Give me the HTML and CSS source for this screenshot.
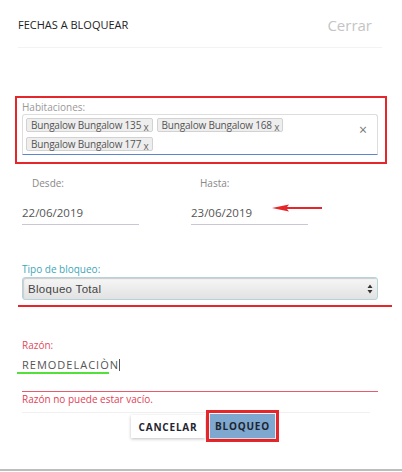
FILE: index.html
```html
<!DOCTYPE html>
<html lang="es">
<head>
    <meta charset="UTF-8">
    <meta name="viewport" content="width=device-width, initial-scale=1.0">
    <title>Fechas a bloquear</title>
    <link rel="stylesheet" href="styles.css">
</head>
<body>
    <div class="modal">
        <header class="modal-head">
            <h1>FECHAS A BLOQUEAR</h1>
            <a href="#" class="close">Cerrar</a>
        </header>

        <section class="hab-frame">
            <label class="hab-label">Habitaciones:</label>
            <div class="multi">
                <div class="tags">
                    <span class="tag">Bungalow Bungalow 135 <i>x</i></span>
                    <span class="tag">Bungalow Bungalow 168 <i>x</i></span>
                    <span class="tag">Bungalow Bungalow 177 <i>x</i></span>
                </div>
                <span class="clear">&times;</span>
            </div>
        </section>

        <section class="dates">
            <div class="date-col">
                <label>Desde:</label>
                <div class="date-val">22/06/2019</div>
            </div>
            <div class="date-col">
                <label>Hasta:</label>
                <div class="date-val">23/06/2019</div>
            </div>
            <svg class="arrow" width="52" height="10" viewBox="0 0 52 10">
                <path d="M0 5 L17 1.5 L15 4 L50 4 L50 6 L15 6 L17 8.5 Z" fill="#e5262b"/>
            </svg>
        </section>

        <section class="tipo">
            <label>Tipo de bloqueo:</label>
            <div class="select">
                <span>Bloqueo Total</span>
                <svg width="6" height="10" viewBox="0 0 6 10">
                    <path d="M3 0.5 L5.5 4 L0.5 4 Z M3 9.5 L5.5 6 L0.5 6 Z" fill="#333"/>
                </svg>
            </div>
        </section>
        <div class="red-rule"></div>

        <section class="razon">
            <label>Razón:</label>
            <div class="razon-val">REMODELACIÒN<span class="caret"></span></div>
            <div class="green-rule"></div>
            <div class="razon-line"></div>
            <p class="error">Razón no puede estar vacío.</p>
        </section>

        <footer class="actions">
            <button class="btn btn-cancel">CANCELAR</button>
            <span class="btn-mark"><button class="btn btn-block">BLOQUEO</button></span>
        </footer>
    </div>
    <div class="bottom-rule"></div>
</body>
</html>
```

FILE: styles.css
```css
* {
    box-sizing: border-box;
    margin: 0;
    padding: 0;
}

body {
    width: 402px;
    height: 472px;
    background: #fff;
    font-family: 'Open Sans', sans-serif;
    color: #444;
    position: relative;
    overflow: hidden;
}

.modal-head {
    height: 48px;
    margin: 0 20px 0 18px;
    display: flex;
    justify-content: space-between;
    align-items: center;
    border-bottom: 1px solid #f3f3f3;
    padding-top: 2px;
}

.modal-head h1 {
    font-size: 11px;
    font-weight: 400;
    color: #222;
    letter-spacing: 0;
}

.close {
    font-size: 15px;
    color: #c4c4c4;
    text-decoration: none;
    margin-right: 10px;
}

.hab-frame {
    margin: 48px 15px 0 15px;
    border: 2px solid #e5262b;
    padding: 2px 7px 7px 5px;
}

.hab-label {
    display: block;
    font-size: 10px;
    line-height: 14px;
    color: #999;
}

.multi {
    display: flex;
    align-items: flex-start;
    height: 41px;
    border: 1px solid #ddd;
    border-bottom-color: #5b86cc;
    border-radius: 3px 3px 0 0;
    padding: 3px;
}

.tags {
    flex: 1;
    display: flex;
    flex-wrap: wrap;
    gap: 5px 4px;
}

.tag {
    height: 14px;
    border: 1px solid #d2d2d2;
    border-radius: 2px;
    background: #eee;
    font-size: 10px;
    line-height: 12px;
    letter-spacing: -0.2px;
    color: #555;
    padding: 0 3px 0 4px;
    white-space: nowrap;
}

.tag i {
    font-style: normal;
    font-size: 10px;
    color: #666;
    position: relative;
    top: 2px;
}

.clear {
    font-size: 14px;
    line-height: 14px;
    color: #777;
    margin: 5px 7px 0 0;
}

.dates {
    position: relative;
    display: flex;
    margin: 12px 24px 0 22px;
}

.date-col {
    width: 117px;
}

.date-col + .date-col {
    margin-left: 52px;
}

.date-col label {
    display: block;
    font-size: 10px;
    line-height: 14px;
    color: #888;
    padding-left: 10px;
}

.date-col + .date-col label {
    padding-left: 9px;
}

.date-val {
    margin-top: 15px;
    font-size: 11.5px;
    line-height: 16px;
    color: #555;
    padding-bottom: 3px;
    border-bottom: 1px solid #c8c8d4;
}

.arrow {
    position: absolute;
    left: 250px;
    top: 27px;
}

.tipo {
    margin: 37px 24px 0 22px;
}

.tipo label {
    display: block;
    font-size: 10px;
    line-height: 14px;
    color: #3ea6b8;
}

.select {
    margin-top: 1px;
    height: 23px;
    display: flex;
    align-items: center;
    justify-content: space-between;
    padding: 0 4px 0 5px;
    border: 1px solid #b5d3d8;
    border-radius: 3px;
    background: linear-gradient(#f6f6f6, #e2e2e2);
    box-shadow: inset 1px 1px 1px #ccc;
}

.select span {
    font-family: 'Liberation Sans', sans-serif;
    font-size: 11.5px;
    color: #444;
    letter-spacing: 0.3px;
}

.red-rule {
    margin: 5px 10px 0 18px;
    height: 2px;
    background: #e5262b;
}

.razon {
    margin: 31px 24px 0 22px;
}

.razon label {
    display: block;
    font-size: 10px;
    line-height: 14px;
    color: #e24a5e;
}

.razon-val {
    margin-top: 6px;
    font-size: 11px;
    line-height: 14px;
    color: #555;
    letter-spacing: 1px;
}

.caret {
    display: inline-block;
    width: 1px;
    height: 12px;
    background: #555;
    vertical-align: -2px;
}

.green-rule {
    width: 92px;
    height: 2px;
    margin-left: -5px;
    background: #53e03a;
}

.razon-line {
    margin-top: 17px;
    height: 1px;
    background: #e85a6e;
}

.error {
    margin-top: 0;
    font-size: 10px;
    line-height: 14px;
    color: #e03f58;
}

.actions {
    margin: 6px 32px 0 22px;
    border-top: 1px solid #f0f0f0;
    display: flex;
    justify-content: center;
    align-items: flex-start;
    padding-left: 18px;
}

.btn {
    font-family: 'Open Sans', sans-serif;
    font-size: 10px;
    font-weight: 700;
    letter-spacing: 0.8px;
    color: #1f2530;
    border: none;
    height: 23px;
    cursor: pointer;
}

.btn-cancel {
    width: 74px;
    margin-top: 2px;
    background: #fff;
    box-shadow: 0 1px 3px rgba(0, 0, 0, 0.25);
}

.btn-mark {
    margin: -3px 0 0 1px;
    border: 3px solid #e5262b;
    padding: 1px;
    display: flex;
}

.btn-block {
    width: 65px;
    height: 24px;
    background: #7ea8cf;
    box-shadow: 0 1px 2px rgba(0, 0, 0, 0.2);
}

.bottom-rule {
    position: absolute;
    left: 0;
    right: 0;
    top: 469px;
    height: 2px;
    background: #bdbdbd;
}
```
